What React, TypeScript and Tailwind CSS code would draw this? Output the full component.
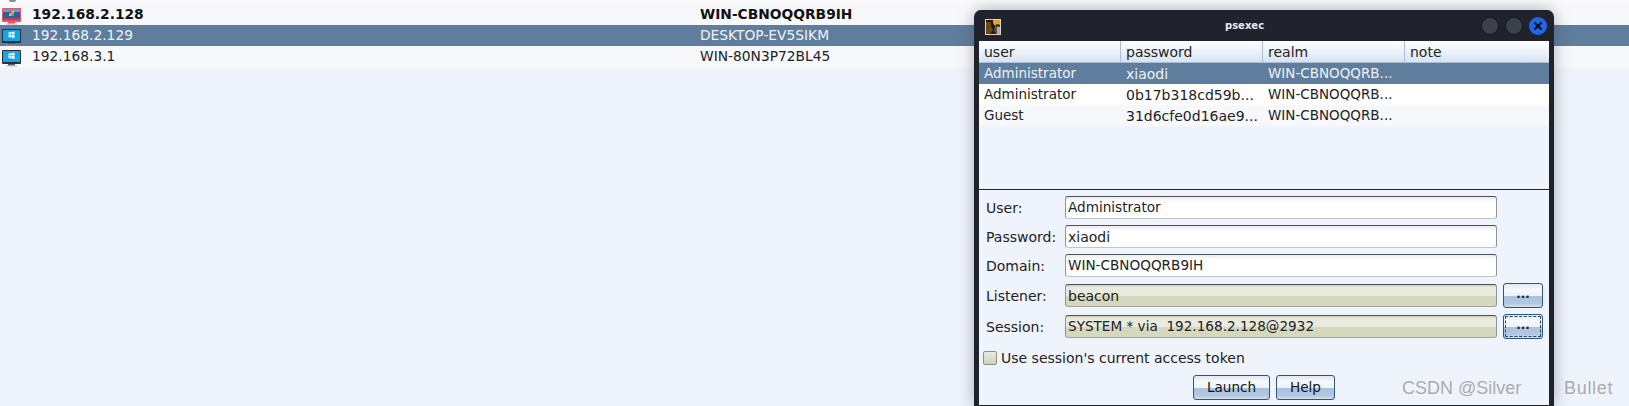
import React from "react";

const font = { fontFamily: '"DejaVu Sans", sans-serif' };

function WinMonitor() {
  return (
    <svg width="21" height="20" viewBox="0 0 21 20" className="shrink-0">
      <rect x="1" y="3" width="19" height="14" rx="1" fill="#2b3036" />
      <rect x="2" y="4" width="17" height="11" fill="#12a5e8" />
      <path d="M7.500 6.500l2.400-.4v2.400H7.500zM10.500 6l3-.5v3H10.500zM7.500 9.100h2.400v2.400l-2.400-.4zM10.500 9.100h3v3l-3-.5z" fill="#ffffff" />
      <rect x="7" y="17" width="7" height="1.500" fill="#5c6167" />
      <rect x="5" y="18.500" width="11" height="1" fill="#9a9ea3" opacity="0.6" />
    </svg>
  );
}

function Win7Monitor() {
  return (
    <svg width="21" height="20" viewBox="0 0 21 20" className="shrink-0">
      <rect x="1" y="3" width="19" height="14" rx="1" fill="#e2536a" />
      <rect x="2" y="4" width="17" height="11" fill="#2c5f9e" />
      <rect x="2" y="4" width="17" height="3" fill="#6f9ac9" />
      <rect x="8" y="6" width="5" height="5" fill="#e8c23a" />
      <rect x="8" y="6" width="2.500" height="2.500" fill="#d8452f" />
      <rect x="10.500" y="8.500" width="2.500" height="2.500" fill="#3e9ad6" />
      <rect x="2" y="13" width="17" height="2" fill="#a9475c" />
      <rect x="7" y="17" width="7" height="1.500" fill="#e2536a" />
      <rect x="5" y="18.500" width="11" height="1" fill="#c9a0aa" />
    </svg>
  );
}

function Avatar() {
  return (
    <svg width="16" height="16" viewBox="0 0 16 16" className="shrink-0">
      <rect width="16" height="16" fill="#d9d5c8" />
      <rect x="1" y="1" width="14" height="14" fill="#241a10" />
      <path d="M1 3h5v4l2 4-3 4H1z" fill="#6b4a12" />
      <path d="M8 1h7v5l-3-1-2 2-2-3z" fill="#e0a526" />
      <path d="M10 7h5v8h-4l-2-4z" fill="#5a5350" />
      <rect x="12" y="8" width="3" height="7" fill="#b9ab96" />
    </svg>
  );
}

function Row({ icon, ip, host, cls }: { icon: React.ReactNode; ip: string; host: string; cls: string }) {
  return (
    <div className={`flex h-[21px] items-center ${cls}`}>
      <div className="flex w-[32px] shrink-0 pl-px">{icon}</div>
      <div className="w-[668px] shrink-0 text-[13.8px]">{ip}</div>
      <div className="text-[13.8px]">{host}</div>
    </div>
  );
}

function TableRow({ cells, cls }: { cells: string[]; cls: string }) {
  return (
    <div className={`flex h-[21px] items-center ${cls}`}>
      {cells.map((c, i) => (
        <div key={i} className={`w-[142px] shrink-0 whitespace-nowrap pl-[5px] ${i === 1 ? "text-[14px]" : "text-[13.5px]"}`}>{c}</div>
      ))}
    </div>
  );
}

function Field({ label, value, beige, btn, small }: { label: string; value: string; beige?: boolean; btn?: "plain" | "focus"; small?: boolean }) {
  return (
    <div className="flex items-center">
      <div className="w-[86px] shrink-0 pl-[7px] text-[#222]">{label}</div>
      <div
        className={`flex h-[23px] w-[432px] shrink-0 items-center whitespace-pre rounded-[3px] border border-x-[#8f9296] border-t-[#4d5156] pl-[2px] text-[#222] ${small ? "text-[13.6px]" : "text-[14px]"} ${
          beige
            ? "border-b-[#a4a690] bg-[linear-gradient(#c9ccb2_0,#e9ebdf_12%,#e9ebdf_50%,#d5d8bd_52%,#d5d8bd_100%)]"
            : "border-b-[#c4c6c6] bg-[linear-gradient(#eaecee_0,#ffffff_25%,#ffffff_100%)]"
        }`}
      >
        {value}
      </div>
      {btn && (
        <div className={`ml-[6px] flex h-[25px] w-[40px] shrink-0 items-center justify-center rounded-[3px] border border-[#2f5578] bg-[linear-gradient(#dfe8f2_0,#f6f9fd_25%,#eef3f9_50%,#a9c2de_54%,#b3c8e0_85%,#d3e0ee_100%)] pb-[3px] text-[12px] font-bold text-[#222] ${btn === "focus" ? "outline-1 -outline-offset-3 outline-dashed outline-[#2a4a6c]" : ""}`}>
          ...
        </div>
      )}
    </div>
  );
}

function ActionButton({ label, w }: { label: string; w: string }) {
  return (
    <div className={`flex h-[25px] ${w} items-center justify-center rounded-[3px] border border-[#2f5578] bg-[linear-gradient(#dfe8f2_0,#f6f9fd_25%,#eef3f9_50%,#a9c2de_54%,#b3c8e0_85%,#d3e0ee_100%)] text-[13.6px] text-[#111]`}>
      {label}
    </div>
  );
}

function CircleBtn() {
  return <div className="h-[18px] w-[18px] rounded-full border border-[#14161b] bg-[#3c414e]" />;
}

export default function App() {
  return (
    <div className="relative h-[406px] w-[1629px] overflow-hidden bg-[#eff3fb] text-[14px] leading-none" style={font}>
      <div className="h-[4px] bg-[#fafafb] pl-[9px]">
        <div className="h-[2px] w-[7px] rounded-b-sm bg-[#8a8c90]" />
      </div>
      <Row icon={<Win7Monitor />} ip="192.168.2.128" host="WIN-CBNOQQRB9IH" cls="bg-[#f7f8fb] font-bold text-[#111]" />
      <Row icon={<WinMonitor />} ip="192.168.2.129" host="DESKTOP-EV5SIKM" cls="bg-[#5f7d9c] text-[#eef2f7]" />
      <Row icon={<WinMonitor />} ip="192.168.3.1" host="WIN-80N3P72BL45" cls="bg-[#f7f8fb] text-[#222]" />

      <div className="absolute left-[974px] top-[10px] flex h-[396px] w-[580px] flex-col rounded-t-[7px] border-x-[5px] border-b-[1px] border-x-[#20232c] border-b-[#20232c] bg-[#20232c] shadow-[0_0_16px_rgba(60,64,80,0.4)]">
        <div className="flex h-[31px] shrink-0 items-center">
          <div className="ml-[6px] mt-[2px]"><Avatar /></div>
          <span className="ml-[224px] mt-[1px] text-[10px] font-bold text-[#e6e8ee]">psexec</span>
          <div className="ml-auto mr-[2px] mt-[1px] flex gap-[6px]">
            <CircleBtn />
            <CircleBtn />
            <div className="flex h-[18px] w-[18px] items-center justify-center rounded-full bg-[#2166e8]">
              <svg width="10" height="10" viewBox="0 0 10 10">
                <path d="M1.500 1.500l7 7M8.500 1.500l-7 7" stroke="#0c0f18" strokeWidth="2.200" />
              </svg>
            </div>
          </div>
        </div>
        <div className="flex flex-1 flex-col bg-[#eff3fb]">
          <div className="h-[149px] shrink-0 border-b border-[#20232c]">
            <div className="flex h-[22px] items-center border-b border-[#a9c0d8] bg-[linear-gradient(#ffffff,#d8e4f2)] text-[#222]">
              {["user", "password", "realm", "note"].map((h, i) => (
                <div key={h} className={`flex h-full w-[142px] items-center pl-[5px] ${i < 3 ? "border-r border-[#a9c0d8]" : ""}`}>{h}</div>
              ))}
            </div>
            <TableRow cells={["Administrator", "xiaodi", "WIN-CBNOQQRB..."]} cls="bg-[#5f7d9c] text-[#eef2f7]" />
            <TableRow cells={["Administrator", "0b17b318cd59b...", "WIN-CBNOQQRB..."]} cls="bg-white text-[#222]" />
            <TableRow cells={["Guest", "31d6cfe0d16ae9...", "WIN-CBNOQQRB..."]} cls="bg-[#f7f8fb] text-[#222]" />
          </div>
          <div className="flex flex-col pt-[6px]">
            <div className="flex flex-col gap-[6px]">
              <Field label="User:" value="Administrator" small />
              <Field label="Password:" value="xiaodi" />
              <Field label="Domain:" value="WIN-CBNOQQRB9IH" small />
            </div>
            <div className="mt-[6px] flex flex-col gap-[6px]">
              <Field label="Listener:" value="beacon" beige btn="plain" />
              <Field label="Session:" value="SYSTEM * via  192.168.2.128@2932" beige btn="focus" small />
            </div>
            <div className="mt-[12px] flex items-center pl-[4px] text-[#222]">
              <div className="h-[14px] w-[14px] shrink-0 rounded-[2px] border border-[#8d9080] bg-[linear-gradient(#e9ebdf,#d0d3b8)]" />
              <span className="ml-[4px]">Use session's current access token</span>
            </div>
            <div className="mt-[10px] flex gap-[6px] pl-[214px]">
              <ActionButton label="Launch" w="w-[77px]" />
              <ActionButton label="Help" w="w-[59px]" />
            </div>
          </div>
        </div>
      </div>

      <div className="absolute left-[1402px] top-[379px] whitespace-pre text-[18px] text-[rgba(120,120,120,0.6)]" style={{ fontFamily: '"Liberation Sans", sans-serif' }}>
        CSDN @Silver
      </div>
      <div className="absolute left-[1564px] top-[379px] text-[18px] tracking-[0.7px] text-[rgba(120,120,120,0.6)]" style={{ fontFamily: '"Liberation Sans", sans-serif' }}>
        Bullet
      </div>
    </div>
  );
}
